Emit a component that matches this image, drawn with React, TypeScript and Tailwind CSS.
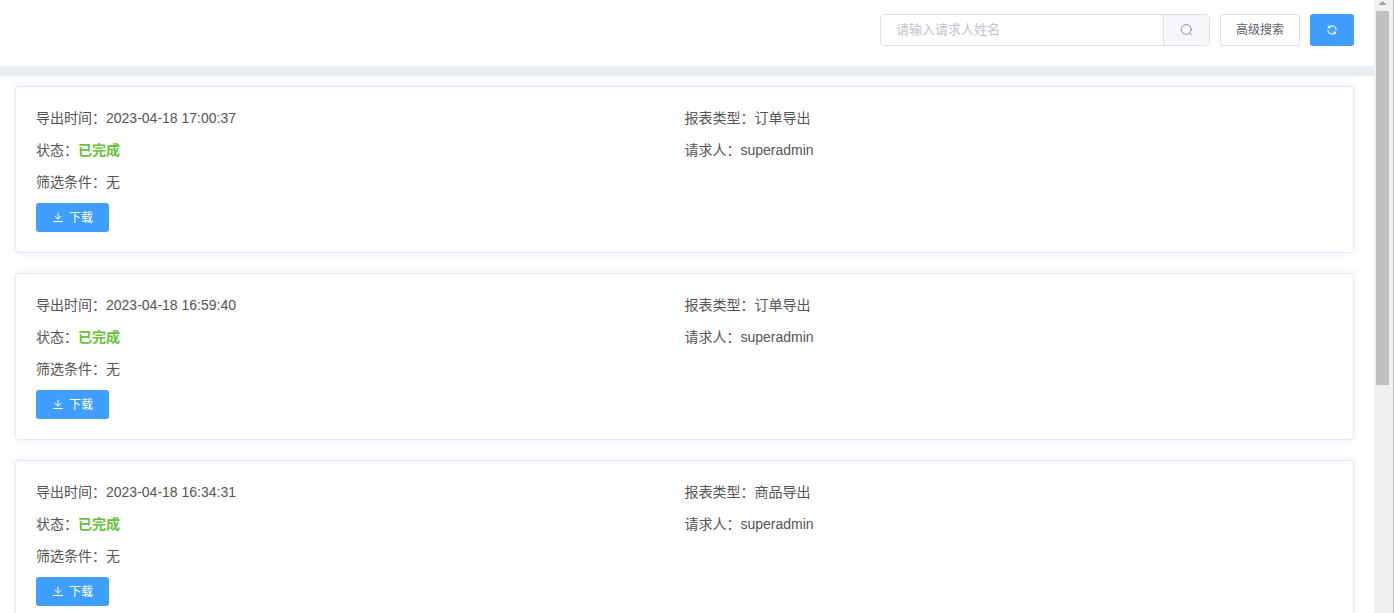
import React from "react";

const records = [
  { time: "2023-04-18 17:00:37", type: "订单导出", user: "superadmin" },
  { time: "2023-04-18 16:59:40", type: "订单导出", user: "superadmin" },
  { time: "2023-04-18 16:34:31", type: "商品导出", user: "superadmin" },
];

function SearchIcon() {
  return (
    <svg viewBox="0 0 14 14" className="size-3.5" fill="none" stroke="currentColor" strokeLinecap="round">
      <circle cx="6.3" cy="6.5" r="4.9" />
      <path d="M9.8 10.2l1.9 1.9" />
    </svg>
  );
}

function RefreshIcon() {
  return (
    <svg viewBox="0 0 1024 1024" className="size-3" fill="currentColor" stroke="currentColor" strokeWidth="30">
      <path d="M771.776 794.88A384 384 0 0 1 128 512h64a320 320 0 0 0 555.712 216.448H654.72a32 32 0 1 1 0-64h149.056a32 32 0 0 1 32 32v148.928a32 32 0 1 1-64 0v-50.56zM276.288 295.616h92.992a32 32 0 0 1 0 64H220.16a32 32 0 0 1-32-32V178.56a32 32 0 0 1 64 0v50.56A384 384 0 0 1 896.128 512h-64a320 320 0 0 0-555.776-216.384z" />
    </svg>
  );
}

function DownloadIcon() {
  return (
    <svg viewBox="0 0 12 12" className="size-3" fill="none" stroke="currentColor" strokeLinecap="round" strokeLinejoin="round">
      <path d="M6 1.2v5.8M3 4.2l3 3 3-3" />
      <path d="M1.5 9.5h9" />
    </svg>
  );
}

function RecordCard({ time, type, user }: { time: string; type: string; user: string }) {
  return (
    <article className="rounded border border-[#e4e9f3] bg-white p-5 shadow-[0_0_10px_#e8edfa]">
      <div className="mb-2.5 grid grid-cols-2 gap-y-2.5 text-sm leading-[22px]">
        <p>导出时间：{time}</p>
        <p>报表类型：{type}</p>
        <p>
          状态：<span className="font-bold text-[#67c23a]">已完成</span>
        </p>
        <p>请求人：{user}</p>
        <p>筛选条件：无</p>
      </div>
      <button
        type="button"
        className="flex h-[29px] items-center gap-[5px] rounded-[3px] bg-[#409eff] px-4 text-xs text-white"
      >
        <DownloadIcon />
        下载
      </button>
    </article>
  );
}

export default function App() {
  return (
    <div className="flex h-screen overflow-hidden bg-white font-['Liberation_Sans','Noto_Sans_CJK_SC',sans-serif] text-[#555]">
      <main className="min-w-0 flex-1 overflow-hidden">
        <header className="flex justify-end gap-2.5 border-b-10 border-[#e8edf1] pt-3.5 pr-5 pb-5">
          <form className="flex h-8 w-[330px] overflow-hidden rounded border border-[#dcdfe6]">
            <input
              type="text"
              aria-label="请求人姓名"
              placeholder="请输入请求人姓名"
              className="min-w-0 flex-1 px-[15px] text-[13px] outline-none placeholder:text-[#c0c4cc]"
            />
            <button
              type="button"
              aria-label="搜索"
              className="flex w-[46px] items-center justify-center border-l border-[#dcdfe6] bg-[#f5f7fa] text-[#909399]"
            >
              <SearchIcon />
            </button>
          </form>
          <button type="button" className="h-8 w-20 rounded-[3px] border border-[#dcdfe6] text-xs text-[#606266]">
            高级搜索
          </button>
          <button
            type="button"
            aria-label="刷新"
            className="flex h-8 w-11 items-center justify-center rounded-[3px] bg-[#409eff] text-white"
          >
            <RefreshIcon />
          </button>
        </header>
        <section className="flex flex-col gap-5 pt-2.5 pr-5 pb-5 pl-[15px]">
          {records.map((record) => (
            <RecordCard key={record.time} {...record} />
          ))}
        </section>
      </main>
      <div className="flex w-5 flex-col border-r border-[#bdbdbd] bg-[#f0f0f0] pr-1 pl-0.5">
        <svg viewBox="0 0 13 11" className="h-[11px] shrink-0" fill="#a0a0a0">
          <path d="M2.5 5l4-4 4 4z" />
        </svg>
        <div className="h-[61%] bg-[#c1c1c1]" />
      </div>
    </div>
  );
}
